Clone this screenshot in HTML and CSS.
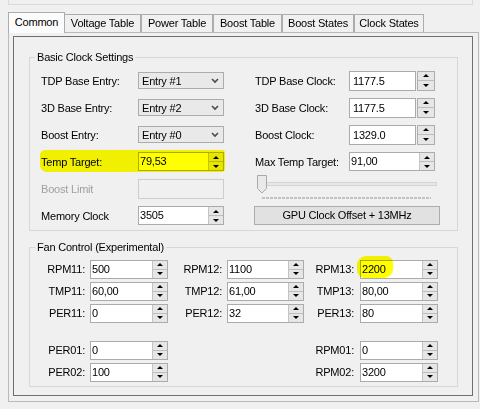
FILE: index.html
```html
<!DOCTYPE html>
<html lang="en">
<head>
  <meta charset="UTF-8" />
  <meta name="viewport" content="width=device-width, initial-scale=1.0"/>
  <title>Clock Settings</title>
  <link rel="stylesheet" href="styles.css">
</head>
<body>

<div class="top-frame"></div>

<div class="tabs">
  <div class="tab active">Common</div>
  <div class="tab t-voltage">Voltage Table</div>
  <div class="tab t-power">Power Table</div>
  <div class="tab t-boost">Boost Table</div>
  <div class="tab t-states">Boost States</div>
  <div class="tab t-clock">Clock States</div>
</div>

<div class="tab-page">
  <div class="panel">

    <fieldset class="group">
      <legend>Basic Clock Settings</legend>
      <div class="basic-grid">

        <label>TDP Base Entry:</label>
        <div class="combo">Entry #1 <svg class="chev" width="8" height="6" viewBox="0 0 8 6"><path d="M1 1 L4 4 L7 1" fill="none" stroke="#4a4a4a" stroke-width="1.6"/></svg></div>
        <label class="col-b">TDP Base Clock:</label>
        <div class="text">1177.5</div>
        <div class="spin"><span><b class="up"></b></span><span><b class="down"></b></span></div>

        <label>3D Base Entry:</label>
        <div class="combo">Entry #2 <svg class="chev" width="8" height="6" viewBox="0 0 8 6"><path d="M1 1 L4 4 L7 1" fill="none" stroke="#4a4a4a" stroke-width="1.6"/></svg></div>
        <label class="col-b">3D Base Clock:</label>
        <div class="text">1177.5</div>
        <div class="spin"><span><b class="up"></b></span><span><b class="down"></b></span></div>

        <label>Boost Entry:</label>
        <div class="combo">Entry #0 <svg class="chev" width="8" height="6" viewBox="0 0 8 6"><path d="M1 1 L4 4 L7 1" fill="none" stroke="#4a4a4a" stroke-width="1.6"/></svg></div>
        <label class="col-b">Boost Clock:</label>
        <div class="text">1329.0</div>
        <div class="spin"><span><b class="up"></b></span><span><b class="down"></b></span></div>

        <label>Temp Target:</label>
        <div class="num"><div class="val">79,53</div><div class="spin"><span><b class="up"></b></span><span><b class="down"></b></span></div></div>
        <label class="col-b">Max Temp Target:</label>
        <div class="num wide"><div class="val">91,00</div><div class="spin"><span><b class="up"></b></span><span><b class="down"></b></span></div></div>

        <label class="dim">Boost Limit</label>
        <div class="off"></div>
        <svg class="slider" width="185" height="27" viewBox="0 0 185 27">
          <rect x="3.5" y="7.5" width="179" height="3" fill="#e7e7e7" stroke="#d4d4d4"/>
          <line x1="8" y1="23" x2="177" y2="23" stroke="#c2c2c2" stroke-width="2" stroke-dasharray="3 1"/>
          <polygon points="3.5,0.5 12.5,0.5 12.5,13.5 8,18 3.5,13.5" fill="#e9e9e9" stroke="#a9a9a9"/>
        </svg>

        <label>Memory Clock</label>
        <div class="num"><div class="val">3505</div><div class="spin"><span><b class="up"></b></span><span><b class="down"></b></span></div></div>
        <div class="btn">GPU Clock Offset + 13MHz</div>

        <span class="mark mark-temp"></span>
      </div>
    </fieldset>

    <fieldset class="group fan">
      <legend>Fan Control (Experimental)</legend>
      <div class="fan-grid">
        <label>RPM11:</label>
        <div class="num"><div class="val">500</div><div class="spin"><span><b class="up"></b></span><span><b class="down"></b></span></div></div>
        <label>RPM12:</label>
        <div class="num"><div class="val">1100</div><div class="spin"><span><b class="up"></b></span><span><b class="down"></b></span></div></div>
        <label class="c5">RPM13:</label>
        <div class="num"><div class="val">2200</div><div class="spin"><span><b class="up"></b></span><span><b class="down"></b></span></div></div>

        <label>TMP11:</label>
        <div class="num"><div class="val">60,00</div><div class="spin"><span><b class="up"></b></span><span><b class="down"></b></span></div></div>
        <label>TMP12:</label>
        <div class="num"><div class="val">61,00</div><div class="spin"><span><b class="up"></b></span><span><b class="down"></b></span></div></div>
        <label class="c5">TMP13:</label>
        <div class="num"><div class="val">80,00</div><div class="spin"><span><b class="up"></b></span><span><b class="down"></b></span></div></div>

        <label>PER11:</label>
        <div class="num"><div class="val">0</div><div class="spin"><span><b class="up"></b></span><span><b class="down"></b></span></div></div>
        <label>PER12:</label>
        <div class="num"><div class="val">32</div><div class="spin"><span><b class="up"></b></span><span><b class="down"></b></span></div></div>
        <label class="c5">PER13:</label>
        <div class="num"><div class="val">80</div><div class="spin"><span><b class="up"></b></span><span><b class="down"></b></span></div></div>

        <span class="mark mark-rpm"></span>
      </div>

      <div class="fan-grid extra">
        <label>PER01:</label>
        <div class="num"><div class="val">0</div><div class="spin"><span><b class="up"></b></span><span><b class="down"></b></span></div></div>
        <label class="c5">RPM01:</label>
        <div class="num"><div class="val">0</div><div class="spin"><span><b class="up"></b></span><span><b class="down"></b></span></div></div>

        <label>PER02:</label>
        <div class="num"><div class="val">100</div><div class="spin"><span><b class="up"></b></span><span><b class="down"></b></span></div></div>
        <label class="c5">RPM02:</label>
        <div class="num"><div class="val">3200</div><div class="spin"><span><b class="up"></b></span><span><b class="down"></b></span></div></div>
      </div>
    </fieldset>

  </div>
</div>

</body>
</html>
```

FILE: styles.css
```css
* {
  box-sizing: border-box;
}

body {
  margin: 0;
  background: #f0f0f0;
  font-family: "Liberation Sans", Arial, sans-serif;
  font-size: 11px;
  letter-spacing: -0.2px;
  color: #000;
}

/* edge of the box above the tab control */
.top-frame {
  margin-left: 8px;
  width: 465px;
  height: 5px;
  border: 1px solid #dadada;
  border-top: none;
}

.tabs {
  display: flex;
  align-items: flex-end;
  margin: 7px 0 0 8px;
  height: 20px;
}

.tab {
  height: 18px;
  line-height: 17px;
  text-align: center;
  white-space: nowrap;
  border: 1px solid #acacac;
  border-bottom: none;
  background: #f0f0f0;
}

.tab.active {
  position: relative;
  z-index: 1;
  width: 57px;
  height: 21px;
  margin-bottom: -1px;
  line-height: 19px;
  background: #fcfcfc;
}

.t-voltage { width: 77px; margin-left: -1px; }
.t-power   { width: 72px; }
.t-boost   { width: 69px; }
.t-states  { width: 72px; }
.t-clock   { width: 70px; }

.tab-page {
  margin-left: 8px;
  width: 471px;
  height: 370px;
  border: 1px solid #b9b9b9;
  padding: 3px 5px 5px 4px;
}

.panel {
  height: 100%;
  border: 1px solid #6f6f6f;
}

.group {
  margin: 13px 0 0 15px;
  width: 429px;
  min-width: 0;
  padding: 3px 0 1px 0;
  border: 1px solid #d7d7d7;
}

.group legend {
  margin-left: 5px;
  padding: 0 2px;
  line-height: 14px;
}

.fan {
  margin-top: 9px;
  padding: 4px 0 3px 0;
}

label {
  white-space: nowrap;
}

.basic-grid {
  position: relative;
  margin-left: 11px;
  display: grid;
  grid-template-columns: 97px 86px 31px 94px 68px 18px;
  grid-auto-rows: 27px;
  align-items: center;
}

.col-b {
  grid-column: 4;
}

.combo {
  height: 17px;
  display: flex;
  align-items: center;
  justify-content: space-between;
  padding: 0 4px 0 3px;
  border: 1px solid #acacac;
  background: #e9e9e9;
}

.text {
  width: 67px;
  height: 20px;
  line-height: 18px;
  padding-left: 3px;
  border: 1px solid #ababab;
  background: #fff;
}

.spin {
  display: flex;
  flex-direction: column;
  width: 18px;
  height: 20px;
  border: 1px solid #adadad;
  background: #e6e6e6;
}

.spin span {
  flex: 1;
  display: flex;
  align-items: center;
  justify-content: center;
}

.spin span + span {
  border-top: 1px solid #bdbdbd;
}

.up, .down {
  width: 0;
  height: 0;
  border-left: 3px solid transparent;
  border-right: 3px solid transparent;
}

.up {
  border-bottom: 3px solid #000;
}

.down {
  border-top: 3px solid #000;
}

.num {
  display: flex;
  height: 19px;
  border: 1px solid #ababab;
  background: #fff;
}

.num .val {
  flex: 1;
  padding-left: 1px;
  line-height: 17px;
}

.num .spin {
  width: 15px;
  height: auto;
  border-width: 0 0 0 1px;
  border-color: #c4c4c4;
}

.num.wide {
  grid-column: 5 / 7;
}

.dim {
  color: #a0a0a0;
}

.off {
  height: 20px;
  border: 1px solid #cdcdcd;
  background: #f0f0f0;
}

.slider {
  grid-column: 4 / 7;
  margin-left: -1px;
  display: block;
}

.btn {
  grid-column: 4 / 7;
  margin-left: -1px;
  width: 186px;
  height: 19px;
  line-height: 17px;
  text-align: center;
  border: 1px solid #adadad;
  background: #e1e1e1;
}

.fan-grid {
  position: relative;
  display: grid;
  grid-template-columns: 60px 78px 59px 77px 56px 78px;
  grid-auto-rows: 22px;
  align-items: center;
}

.fan-grid label {
  text-align: right;
  padding-right: 5px;
}

.fan-grid label.c5 {
  grid-column: 5;
  padding-right: 6px;
}

.extra {
  margin-top: 15px;
}

/* yellow marker strokes drawn over the screenshot */
.mark {
  position: absolute;
  background: #ffff00;
  mix-blend-mode: multiply;
}

.mark-temp {
  left: -1px;
  top: 83px;
  width: 185px;
  height: 22px;
  border-radius: 5px 3px 4px 7px;
}

.mark-rpm {
  left: 327px;
  top: -2px;
  width: 36px;
  height: 22px;
  border-radius: 9px 7px 9px 8px;
}
```
